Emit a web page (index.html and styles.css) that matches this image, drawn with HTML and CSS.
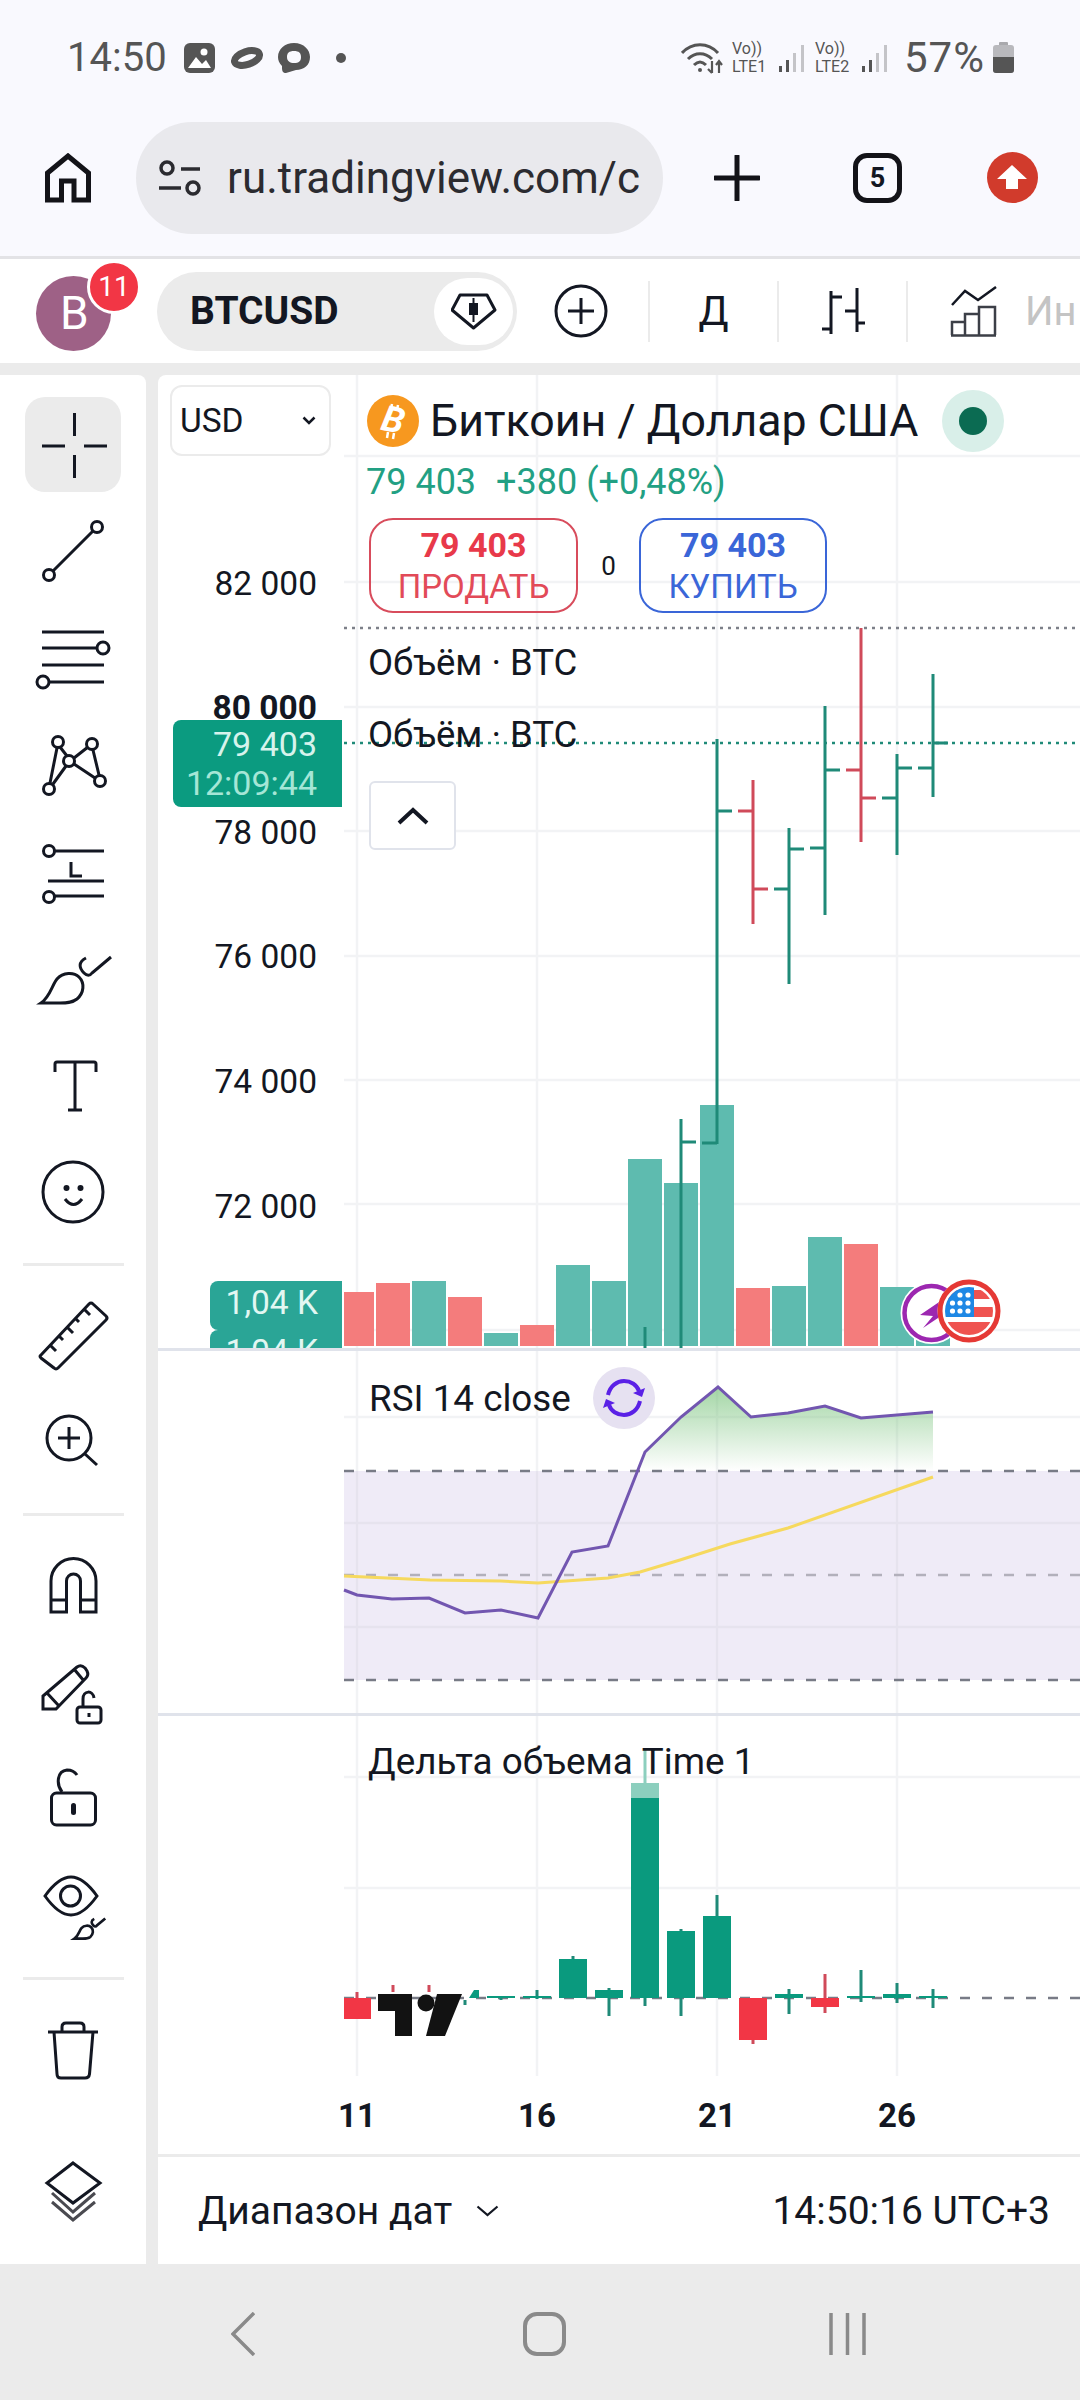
FILE: index.html
```html
<!DOCTYPE html>
<html lang="ru">
<head>
    <meta charset="UTF-8">
    <title>BTCUSD</title>
    <link rel="stylesheet" href="styles.css">
</head>
<body>
    <div class="status-bar">
        <span class="clock">14:50</span>
        <svg class="st-icon ml-19" width="31" height="30" viewBox="0 0 31 30"><rect width="31" height="30" rx="6" fill="#555"/><circle cx="20" cy="9" r="3.5" fill="#fff"/><path d="M4 25 L12 14 L18 21 L22 17 L27 25 Z" fill="#fff"/></svg>
        <svg class="st-icon ml-14" width="36" height="22" viewBox="0 0 36 22"><ellipse cx="18" cy="11" rx="13" ry="6.5" transform="rotate(-18 18 11)" fill="none" stroke="#555" stroke-width="7"/></svg>
        <svg class="st-icon ml-13" width="32" height="30" viewBox="0 0 32 30"><path d="M16 0 C26 0 32 7 32 14 C32 22 26 27 18 27 L8 30 C5 30 4 28 4 25 L4 23 C1 20 0 17 0 14 C0 6 7 0 16 0 Z M16 8 C11 8 9 10 9 14 C9 18 12 20 16 20 C21 20 23 18 23 14 C23 10 21 8 16 8 Z" fill="#555" fill-rule="evenodd"/></svg>
        <span class="st-dot"></span>
        <div class="st-right">
            <svg width="45" height="34" viewBox="0 0 45 34" fill="none" stroke="#555" stroke-width="3"><path d="M1 12 C11 1 27 1 37 12"/><path d="M7 18 C14 11 24 11 31 18"/><path d="M13 24 C17 20 21 20 25 24"/><circle cx="19" cy="29" r="2" fill="#555" stroke="none"/><path d="M31 20 V32 M27 28 L31 32 M35 24 L38 20 L41 24 M38 20 V32" stroke-width="2.2"/></svg>
            <div class="sim"><span>Vo))</span><span>LTE1</span></div>
            <svg class="sig" width="28" height="30" viewBox="0 0 28 30"><rect x="1" y="23" width="3" height="6" fill="#555"/><rect x="8" y="17" width="3" height="12" fill="#555"/><rect x="15" y="10" width="3" height="19" fill="#c4c4c8"/><rect x="23" y="2" width="3" height="27" fill="#c4c4c8"/></svg>
            <div class="sim sim-2"><span>Vo))</span><span>LTE2</span></div>
            <svg class="sig" width="28" height="30" viewBox="0 0 28 30"><rect x="1" y="23" width="3" height="6" fill="#555"/><rect x="8" y="17" width="3" height="12" fill="#555"/><rect x="15" y="10" width="3" height="19" fill="#c4c4c8"/><rect x="23" y="2" width="3" height="27" fill="#c4c4c8"/></svg>
            <span class="battery-pct">57%</span>
            <svg class="battery" width="21" height="31" viewBox="0 0 21 31"><rect x="6" y="0" width="9" height="4" rx="1" fill="#a9a9ad"/><rect x="0" y="3" width="21" height="28" rx="3" fill="#b9b9bd"/><path d="M0 15 H21 V28 Q21 31 18 31 H3 Q0 31 0 28 Z" fill="#555"/></svg>
        </div>
    </div>

    <div class="browser-bar">
        <svg class="home-btn" width="46" height="50" viewBox="45 153 46 50" fill="none" stroke="#131318" stroke-width="5"><path d="M47.5 200 V173 L68 156 L88.5 173 V200 H74 V181 H61.5 V200 Z"/></svg>
        <div class="url-pill">
            <svg class="tune" width="42" height="36" viewBox="159 159 42 36" fill="none" stroke="#2b2b30" stroke-width="3.5"><circle cx="167" cy="167" r="6"/><path d="M181 168 H200 M159 187 H181"/><circle cx="193" cy="187" r="6"/></svg>
            <span class="url-text">ru.tradingview.com/c</span>
        </div>
        <svg class="plus-btn" width="46" height="46" viewBox="0 0 46 46"><path d="M23 1 V45 M1 23 H45" stroke="#131318" stroke-width="5" stroke-linecap="round"/></svg>
        <div class="tab-count">5</div>
        <svg class="upload-btn" width="51" height="51" viewBox="987 153 51 51"><circle cx="1012.5" cy="178.5" r="25.5" fill="#d13b2c"/><path d="M1012 166 L1027 180 H1018 V190 H1006 V180 H997 Z" fill="#fff"/></svg>
    </div>

    <div class="tv-toolbar">
        <div class="avatar">B<span class="avatar-badge">11</span></div>
        <div class="symbol-pill">
            <span class="symbol-name">BTCUSD</span>
            <div class="symbol-diamond">
                <svg width="46" height="38" viewBox="450 292 46 38"><path d="M459 295 H486 L494 310 L472.5 328 L451 310 Z" fill="none" stroke="#131722" stroke-width="3" stroke-linejoin="round"/><rect x="468" y="303" width="9" height="12" fill="#131722"/><path d="M472.5 298 V322" stroke="#131722" stroke-width="2"/></svg>
            </div>
        </div>
        <svg class="add-symbol" width="54" height="54" viewBox="0 0 54 54" fill="none" stroke="#131722" stroke-width="3"><circle cx="27" cy="27" r="25"/><path d="M27 14 V40 M14 27 H40"/></svg>
        <span class="tb-sep"></span>
        <div class="tb-btn tb-interval">Д</div>
        <span class="tb-sep"></span>
        <div class="tb-btn">
            <svg width="44" height="48" viewBox="823 286 44 48" fill="none" stroke="#131722" stroke-width="3"><path d="M833 290 V333 M824 328 H833 M833 296 H844 M859 287 V331 M847 310 H859 M859 322 H867"/></svg>
        </div>
        <span class="tb-sep"></span>
        <svg class="tb-indicators" width="47" height="51" viewBox="953 284 47 51" fill="none" stroke="#3c3f47" stroke-width="2.5"><path d="M955 303 L968 289 L981 298 L999 285" stroke="#131722"/><path d="M955 333 V320 H968 V333 M968 333 V312 H982 V333 M982 333 V305 H998 V333 M954 333.5 H999" /></svg>
        <span class="tb-label">Ин</span>
    </div>

    <div class="workspace">
        <aside class="sidebar">
            <svg class="tool" viewBox="0 393 146 107"><rect x="25" y="397" width="96" height="95" rx="20" fill="#ebebeb"/><path d="M74.5 413 V436 M74.5 455 V478 M42 446 H65 M84 446 H107"/></svg>
            <svg class="tool" viewBox="0 500 146 107"><circle cx="97" cy="527" r="5.5"/><circle cx="49" cy="575" r="5.5"/><path d="M93 531 L53 571"/></svg>
            <svg class="tool" viewBox="0 607 146 107"><path d="M42 632 H104 M42 648 H97 M42 665 H104 M49 682 H104"/><circle cx="103" cy="648" r="6"/><circle cx="43" cy="682" r="6"/></svg>
            <svg class="tool" viewBox="0 714 146 107"><circle cx="58" cy="742" r="5.5"/><circle cx="92" cy="744" r="5.5"/><circle cx="69" cy="761" r="5.5"/><circle cx="49" cy="789" r="5.5"/><circle cx="100" cy="781" r="5.5"/><path d="M57 748 L50 783 M60 747 L67 756 M74 758 L88 747 M93 750 L99 775 M74 764 L95 778 M66 766 L53 784"/></svg>
            <svg class="tool" viewBox="0 821 146 107"><circle cx="49" cy="851" r="5.5"/><path d="M55 851 H104 M71 862 V876 H82"/><path d="M48 881 H104 M55 896 H104"/><circle cx="49" cy="897" r="5.5"/></svg>
            <svg class="tool" viewBox="0 928 146 107"><path d="M41 1003 C50 997 52 985 57 979 C63 972 74 972 79 977 C85 983 84 993 77 999 C72 1003 66 1003 60 1003 Z"/><path d="M86 958 C78 962 79 968 84 973 C87 976 90 976 92 973 L111 957"/></svg>
            <svg class="tool" viewBox="0 1035 146 107"><path d="M55 1072 V1064 Q55 1062 57 1062 H94 Q96 1062 96 1064 V1072 M75 1062 V1110 M68 1110 H82"/></svg>
            <svg class="tool" viewBox="0 1142 146 107"><circle cx="73" cy="1192" r="30"/><circle cx="66.5" cy="1188" r="3" class="tool-fill"/><circle cx="80.5" cy="1188" r="3" class="tool-fill"/><path d="M65 1199 Q73.5 1210 82 1199"/></svg>
            <div class="tool-sep sep-a"></div>
            <svg class="tool" viewBox="0 1283 146 107"><path d="M41 1355 L89 1304 Q91 1302 93 1304 L106 1316 Q108 1318 106 1320 L58 1368 Q56 1370 54 1368 L41 1358 Q39 1356 41 1355 Z"/><path d="M50 1345 L56 1351 M59 1336 L63 1340 M67 1327 L73 1333 M75 1318 L79 1322 M84 1309 L90 1315"/></svg>
            <svg class="tool" viewBox="0 1390 146 107"><circle cx="69" cy="1438" r="22"/><path d="M85 1454 L97 1465 M69 1427 V1449 M58 1438 H80"/></svg>
            <div class="tool-sep sep-b"></div>
            <svg class="tool" viewBox="0 1532 146 107"><path d="M51 1612 V1581 A22.5 22.5 0 0 1 96 1581 V1612 H80.5 V1581 A7 7 0 0 0 66.5 1581 V1612 Z M51 1600 H66.5 M80.5 1600 H96"/></svg>
            <svg class="tool" viewBox="0 1639 146 107"><path d="M43 1709 V1696 L77 1667 Q81 1664 85 1668 L87 1671 Q89 1675 86 1678 L56 1709 Z M47 1693 L59 1706 M74 1669 L84 1681"/><rect x="77" y="1707" width="24" height="16" rx="3"/><path d="M83 1707 V1699 C83 1690 93 1690 94 1698 M89 1713 V1717"/></svg>
            <svg class="tool" viewBox="0 1746 146 107"><rect x="51.5" y="1793" width="44" height="32" rx="5"/><path d="M62 1792 C56 1784 57 1771 67 1770 C71 1770 75 1772 77 1775"/><rect x="71" y="1803" width="5" height="12" rx="2.5" class="tool-fill"/></svg>
            <svg class="tool" viewBox="0 1853 146 107"><path d="M45 1896 C55 1882 63 1877 71 1877 C79 1877 87 1882 97 1896 C87 1910 79 1915 71 1915 C63 1915 55 1910 45 1896 Z"/><circle cx="70.5" cy="1896" r="10"/><g transform="translate(74 1918) scale(.44) translate(-40 -956)"><path d="M41 1003 C50 997 52 985 57 979 C63 972 74 972 79 977 C85 983 84 993 77 999 C72 1003 66 1003 60 1003 Z" class="tool-thick"/><path d="M86 958 C78 962 79 968 84 973 C87 976 90 976 92 973 L111 957" class="tool-thick"/></g></svg>
            <div class="tool-sep sep-c"></div>
            <svg class="tool" viewBox="0 1996 146 107"><path d="M48 2032 H98 M62 2032 V2027 Q62 2023 66 2023 H80 Q84 2023 84 2027 V2032 M54 2032 L57 2074 Q57 2078 61 2078 H85 Q89 2078 89.5 2074 L93 2032"/></svg>
            <svg class="tool layers" viewBox="0 2137 146 107"><path d="M73 2163 L100 2183 L73 2203 L47 2183 Z"/><path d="M52 2193 L73 2212 L95 2193 M52 2202 L73 2220 L95 2202" class="tool-grey"/></svg>
        </aside>

        <main class="chart">
            <section class="pane pane-main">
                <svg class="pane-svg" viewBox="158 375 922 973">
                    <g class="grid">
                        <path d="M344 456 H1080 M344 582 H1080 M344 707 H1080 M344 831 H1080 M344 956 H1080 M344 1080 H1080 M344 1204 H1080 M344 1330 H1080"/>
                        <path d="M357 375 V1348 M537 375 V1348 M717 375 V1348 M897 375 V1348"/>
                    </g>
                    <path class="dot-line" d="M344 628 H1080"/>
                    <path class="dot-line dot-green" d="M344 743 H1080"/>
                    <g class="vol-down">
                        <rect x="344" y="1292" width="30" height="54"/>
                        <rect x="376" y="1283" width="34" height="63"/>
                        <rect x="448" y="1297" width="34" height="49"/>
                        <rect x="520" y="1325" width="34" height="21"/>
                        <rect x="736" y="1288" width="34" height="58"/>
                        <rect x="844" y="1244" width="34" height="102"/>
                    </g>
                    <g class="vol-up">
                        <rect x="412" y="1281" width="34" height="65"/>
                        <rect x="484" y="1333" width="34" height="13"/>
                        <rect x="556" y="1265" width="34" height="81"/>
                        <rect x="592" y="1281" width="34" height="65"/>
                        <rect x="628" y="1159" width="34" height="187"/>
                        <rect x="664" y="1183" width="34" height="163"/>
                        <rect x="700" y="1105" width="34" height="241"/>
                        <rect x="772" y="1286" width="34" height="60"/>
                        <rect x="808" y="1237" width="34" height="109"/>
                        <rect x="880" y="1287" width="34" height="59"/>
                        <rect x="916" y="1335" width="34" height="11"/>
                    </g>
                    <g class="ohlc-up">
                        <path d="M645 1327 V1348"/>
                        <path d="M681 1119 V1348 M681 1142 H696"/>
                        <path d="M717 739 V1144 M702 1143 H717 M717 811 H732"/>
                        <path d="M789 828 V984 M774 889 H789 M789 849 H804"/>
                        <path d="M825 706 V915 M810 848 H825 M825 770 H840"/>
                        <path d="M897 754 V855 M882 798 H897 M897 768 H912"/>
                        <path d="M933 674 V797 M918 768 H933 M933 743 H948"/>
                    </g>
                    <g class="ohlc-down">
                        <path d="M753 780 V924 M738 811 H753 M753 889 H768"/>
                        <path d="M861 628 V842 M846 770 H861 M861 798 H876"/>
                    </g>
                    <text class="axis-text" x="317" y="595">82 000</text>
                    <text class="axis-text axis-bold" x="317" y="719">80 000</text>
                    <text class="axis-text" x="317" y="844">78 000</text>
                    <text class="axis-text" x="317" y="968">76 000</text>
                    <text class="axis-text" x="317" y="1093">74 000</text>
                    <text class="axis-text" x="317" y="1218">72 000</text>
                    <!-- event markers -->
                    <circle cx="931.5" cy="1313" r="31" fill="#fff"/>
                    <circle cx="931.5" cy="1313" r="27" fill="#fff" stroke="#9c27b0" stroke-width="4.5"/>
                    <path d="M945 1298 L920 1315 L933 1316 L923 1328 L950 1310 L938 1310 Z" fill="#9c27b0"/>
                    <circle cx="969" cy="1311" r="31.5" fill="#fff"/>
                    <clipPath id="flagClip"><circle cx="969" cy="1311" r="24"/></clipPath>
                    <g clip-path="url(#flagClip)">
                        <rect x="945" y="1290" width="48" height="9" fill="#ef5350"/>
                        <rect x="974" y="1307" width="20" height="10" fill="#ef5350"/>
                        <rect x="945" y="1322" width="48" height="14" fill="#ef5350"/>
                        <rect x="945" y="1285" width="29" height="32" fill="#1e88e5"/>
                        <g fill="#fff"><circle cx="960" cy="1295" r="2.6"/><circle cx="968" cy="1295" r="2.6"/><circle cx="952.5" cy="1303" r="2.6"/><circle cx="960" cy="1303" r="2.6"/><circle cx="968" cy="1303" r="2.6"/><circle cx="952.5" cy="1311" r="2.6"/><circle cx="960" cy="1311" r="2.6"/><circle cx="968" cy="1311" r="2.6"/></g>
                    </g>
                    <circle cx="969" cy="1311" r="29" fill="none" stroke="#e53935" stroke-width="5"/>
                </svg>

                <div class="currency-select">USD
                    <svg width="14" height="9" viewBox="0 0 14 9"><path d="M1.5 1.5 L7 7 L12.5 1.5" fill="none" stroke="#131722" stroke-width="2.5"/></svg>
                </div>

                <div class="legend">
                    <div class="legend-title">
                        <svg class="btc-logo" width="52" height="52" viewBox="0 0 52 52"><circle cx="26" cy="26" r="26" fill="#f7981f"/><path d="M25 9 L24 14 M31 10 L30 15 M21 37 L20 43 M27 38 L26 44" stroke="#fff" stroke-width="2.5"/><text class="btc-b" x="26" y="37" transform="rotate(12 26 26)">B</text></svg>
                        <span class="legend-name">Биткоин / Доллар США</span>
                        <span class="status-dot"><span></span></span>
                    </div>
                    <div class="legend-price"><span>79 403</span><span>+380 (+0,48%)</span></div>
                    <div class="trade-row">
                        <div class="trade-btn trade-sell"><b>79 403</b><span>ПРОДАТЬ</span></div>
                        <span class="spread">0</span>
                        <div class="trade-btn trade-buy"><b>79 403</b><span>КУПИТЬ</span></div>
                    </div>
                    <div class="legend-row">Объём · BTC</div>
                    <div class="legend-row">Объём · BTC</div>
                    <div class="collapse-btn">
                        <svg width="34" height="20" viewBox="0 0 34 20"><path d="M3 17 L17 4 L31 17" fill="none" stroke="#131722" stroke-width="4"/></svg>
                    </div>
                </div>

                <div class="price-pill"><span>79 403</span><span class="price-timer">12:09:44</span></div>
                <div class="vol-pill vol-pill-1">1,04 K</div>
                <div class="vol-pill vol-pill-2">1,04 K</div>
            </section>

            <section class="pane pane-rsi">
                <svg class="pane-svg" viewBox="158 1351 922 362">
                    <defs>
                        <linearGradient id="rsiFill" x1="0" y1="1387" x2="0" y2="1471" gradientUnits="userSpaceOnUse">
                            <stop offset="0" stop-color="#7cc47f" stop-opacity=".7"/>
                            <stop offset="1" stop-color="#7cc47f" stop-opacity="0"/>
                        </linearGradient>
                    </defs>
                    <rect x="344" y="1471" width="736" height="209" fill="#efebf7"/>
                    <g class="grid">
                        <path d="M344 1417 H1080"/>
                        <path d="M357 1351 V1713 M537 1351 V1713 M717 1351 V1713 M897 1351 V1713"/>
                    </g>
                    <path class="grid-band" d="M344 1523 H1080 M344 1627 H1080 M357 1471 V1680 M537 1471 V1680 M717 1471 V1680 M897 1471 V1680"/>
                    <path d="M637 1471 L645 1452 L681 1417 L718 1387 L751 1417 L788 1413 L825 1406 L861 1418 L933 1412 V1471 Z" fill="url(#rsiFill)"/>
                    <path class="dash" d="M344 1471 H1080 M344 1680 H1080"/>
                    <path class="dash dash-mid" d="M344 1575 H1080"/>
                    <polyline class="rsi-ma" points="344,1576 430,1580 501,1581 538,1583 608,1578 640,1572 680,1560 730,1544 788,1528 933,1477"/>
                    <polyline class="rsi-line" points="344,1590 357,1595 392,1599 429,1598 465,1613 501,1610 538,1618 572,1552 608,1546 645,1452 681,1417 718,1387 751,1417 788,1413 825,1406 861,1418 933,1412"/>
                </svg>
                <div class="rsi-legend">
                    <span class="pane-title">RSI 14 close</span>
                    <span class="refresh-badge">
                        <svg width="44" height="40" viewBox="0 0 44 40" fill="none" stroke="#5a20e6" stroke-width="4"><path d="M6 17 C8 8 15 3 22 3 C29 3 35 7 37 13"/><path d="M38 23 C36 32 29 37 22 37 C15 37 9 33 7 27"/><path d="M43 10 L40 19 L31 15 Z M1 30 L4 21 L13 25 Z" fill="#5a20e6" stroke="none"/></svg>
                    </span>
                </div>
            </section>

            <section class="pane pane-delta">
                <svg class="pane-svg" viewBox="158 1716 922 360">
                    <g class="grid">
                        <path d="M344 1777 H1080 M344 1888 H1080"/>
                        <path d="M357 1716 V2076 M537 1716 V2076 M717 1716 V2076 M897 1716 V2076"/>
                    </g>
                    <path class="dash" d="M344 1998 H1080"/>
                    <g class="wick-down">
                        <path d="M357 1992 V2019 M393 1985 V1992 M429 1985 V1992 M753 2040 V2044 M825 1974 V2013"/>
                    </g>
                    <rect class="body-down" x="344" y="1998" width="27" height="21"/>
                    <rect class="body-down" x="739" y="1998" width="28" height="42"/>
                    <rect class="body-down" x="811" y="1998" width="28" height="9"/>
                    <g class="wick-up">
                        <path d="M465 2000 V2005 M501 1996 V2000 M537 1990 V1999 M573 1956 V1998 M609 1988 V2016 M645 1798 V2006 M681 1929 V2016 M717 1895 V1998 M789 1989 V2014 M861 1970 V2002 M897 1983 V2003 M933 1989 V2008"/>
                    </g>
                    <path class="wick-faint" d="M645 1750 V1783"/>
                    <rect x="631" y="1783" width="28" height="15" fill="#8ccfbe"/>
                    <path class="body-up" d="M469 1998 L474 1990 H479 V1998 Z"/>
                    <rect class="body-up" x="487" y="1996" width="28" height="2"/>
                    <rect class="body-up" x="523" y="1996" width="28" height="2"/>
                    <rect class="body-up" x="559" y="1959" width="28" height="39"/>
                    <rect class="body-up" x="595" y="1990" width="28" height="8"/>
                    <rect class="body-up" x="631" y="1798" width="28" height="200"/>
                    <rect class="body-up" x="667" y="1931" width="28" height="67"/>
                    <rect class="body-up" x="703" y="1916" width="28" height="82"/>
                    <rect class="body-up" x="775" y="1994" width="28" height="4"/>
                    <rect class="body-up" x="847" y="1996" width="28" height="2"/>
                    <rect class="body-up" x="883" y="1994" width="28" height="4"/>
                    <rect class="body-up" x="919" y="1996" width="28" height="2"/>
                    <!-- chart logo -->
                    <path d="M378 1994 H412 V2036 H395 V2011 H378 Z" fill="#121212"/>
                    <circle cx="426" cy="2003" r="8.5" fill="#121212"/>
                    <path d="M437 1994 H462 L445 2036 H426 Z" fill="#121212"/>
                </svg>
                <div class="pane-title delta-title">Дельта объема Time 1</div>
            </section>

            <div class="time-axis">
                <span>11</span><span>16</span><span>21</span><span>26</span>
            </div>

            <div class="range-bar">
                <div class="range-select">Диапазон дат
                    <svg width="23" height="12" viewBox="0 0 23 12"><path d="M1.5 1.5 L11.5 10 L21.5 1.5" fill="none" stroke="#131722" stroke-width="2.2"/></svg>
                </div>
                <span>14:50:16 UTC+3</span>
            </div>
        </main>
    </div>

    <nav class="nav-bar">
        <svg width="24" height="44" viewBox="0 0 24 44"><path d="M23 1 L2 22 L23 43" fill="none" stroke="#8a8a8a" stroke-width="3.5"/></svg>
        <svg class="nav-home" width="43" height="44" viewBox="0 0 43 44"><rect x="2" y="2" width="39" height="40" rx="12" fill="none" stroke="#8a8a8a" stroke-width="4"/></svg>
        <svg class="nav-recent" width="37" height="44" viewBox="0 0 37 44"><path d="M2 1 V43 M18.5 1 V43 M35 1 V43" stroke="#8a8a8a" stroke-width="3.5"/></svg>
    </nav>
</body>
</html>
```
FILE: styles.css
```css
* {
    box-sizing: border-box;
}
body {
    margin: 0;
    width: 1080px;
    height: 2400px;
    display: flex;
    flex-direction: column;
    font-family: Roboto, "Liberation Sans", sans-serif;
    color: #131722;
    background-color: #fff;
    overflow: hidden;
}

/* phone status bar */
.status-bar {
    height: 115px;
    padding: 0 66px 0 67px;
    display: flex;
    align-items: center;
    background-color: #f9f9fe;
    color: #555;
}
.clock {
    font-size: 40px;
}
.ml-19 { margin-left: 17px; }
.ml-14 { margin-left: 14px; }
.ml-13 { margin-left: 13px; }
.st-dot {
    width: 10px;
    height: 10px;
    margin-left: 26px;
    border-radius: 50%;
    background-color: #555;
}
.st-right {
    margin-left: auto;
    display: flex;
    align-items: center;
}
.sim {
    margin-left: 6px;
    width: 38px;
    display: flex;
    flex-direction: column;
    font-size: 16px;
    line-height: 18px;
}
.sim-2 {
    margin-left: 9px;
}
.sig {
    margin-left: 8px;
}
.battery-pct {
    margin-left: 15px;
    font-size: 42px;
    letter-spacing: 1px;
}
.battery {
    margin-left: 8px;
}

/* browser bar */
.browser-bar {
    height: 144px;
    padding: 0 0 16px 45px;
    display: flex;
    align-items: center;
    background-color: #f9f9fe;
    border-bottom: 3px solid #e3e3e6;
}
.url-pill {
    width: 527px;
    height: 112px;
    margin-left: 45px;
    padding: 0 21px 0 23px;
    display: flex;
    align-items: center;
    background-color: #e9e9ed;
    border-radius: 56px;
}
.url-text {
    margin-left: 26px;
    white-space: nowrap;
    font-size: 44px;
    color: #2b2b30;
}
.plus-btn {
    margin-left: 51px;
}
.tab-count {
    width: 49px;
    height: 50px;
    margin-left: 93px;
    display: flex;
    align-items: center;
    justify-content: center;
    border: 5px solid #131318;
    border-radius: 14px;
    font-size: 27px;
    font-weight: 700;
}
.upload-btn {
    margin-left: 85px;
}

/* tradingview top toolbar */
.tv-toolbar {
    height: 104px;
    display: flex;
    align-items: center;
    overflow: hidden;
    background-color: #fff;
}
.tv-toolbar > * {
    flex: none;
}
.avatar {
    position: relative;
    width: 75px;
    height: 75px;
    margin-left: 36px;
    margin-top: 5px;
    padding-left: 24px;
    line-height: 75px;
    font-size: 46px;
    color: #fff;
    background-color: #9e6186;
    border-radius: 50%;
}
.avatar-badge {
    position: absolute;
    left: 51px;
    top: -16px;
    width: 54px;
    height: 54px;
    border: 3px solid #fff;
    border-radius: 50%;
    background-color: #f23645;
    color: #fff;
    font-size: 28px;
    line-height: 48px;
    text-align: center;
}
.symbol-pill {
    width: 360px;
    height: 79px;
    margin-left: 46px;
    padding: 0 4px 0 33px;
    display: flex;
    align-items: center;
    justify-content: space-between;
    background-color: #ebebeb;
    border-radius: 40px;
}
.symbol-name {
    font-size: 39px;
    font-weight: 700;
}
.symbol-diamond {
    width: 79px;
    height: 67px;
    display: flex;
    align-items: center;
    justify-content: center;
    background-color: #fff;
    border-radius: 34px;
}
.add-symbol {
    margin-left: 37px;
}
.tb-sep {
    width: 2px;
    height: 61px;
    background-color: #ebebeb;
}
.add-symbol + .tb-sep {
    margin-left: 40px;
}
.tb-btn {
    width: 127px;
    display: flex;
    justify-content: center;
}
.tb-interval {
    font-size: 40px;
}
.tb-indicators {
    margin-left: 42px;
}
.tb-label {
    margin-left: 28px;
    font-size: 40px;
    color: #c4c4c4;
    white-space: nowrap;
}

/* main work area */
.workspace {
    flex: 1;
    display: flex;
    gap: 12px;
    padding-top: 12px;
    background-color: #ebebeb;
}
.sidebar {
    width: 146px;
    padding-top: 18px;
    display: flex;
    flex-direction: column;
    background-color: #fff;
    border-top-right-radius: 8px;
}
.tool {
    width: 146px;
    height: 107px;
    flex: none;
    fill: none;
    stroke: #131722;
    stroke-width: 3;
}
.tool rect[fill] {
    stroke: none;
}
.tool-fill {
    fill: #131722;
    stroke: none;
}
.tool-thick {
    stroke-width: 6;
}
.tool-grey {
    stroke: #4a4a50;
}
.layers {
    margin-top: 34px;
}
.tool-sep {
    height: 3px;
    width: 101px;
    margin-left: 23px;
    flex: none;
    background-color: #ebebeb;
}
.sep-a { margin-top: 14px; margin-bottom: 17px; }
.sep-b { margin-top: 16px; margin-bottom: 16px; }
.sep-c { margin-top: 17px; margin-bottom: 16px; }

/* chart panes */
.chart {
    width: 922px;
    display: flex;
    flex-direction: column;
    background-color: #fff;
    border-top-left-radius: 8px;
}
.pane {
    position: relative;
    overflow: hidden;
    flex: none;
}
.pane-main {
    height: 976px;
    border-bottom: 3px solid #e0e3eb;
}
.pane-rsi {
    height: 365px;
    border-bottom: 3px solid #e0e3eb;
}
.pane-delta {
    height: 360px;
}
.pane-svg {
    position: absolute;
    left: 0;
    top: 0;
    width: 922px;
}
.pane-main .pane-svg { height: 973px; }
.pane-rsi .pane-svg { height: 362px; }
.pane-delta .pane-svg { height: 360px; }
.grid {
    fill: none;
    stroke: #f2f3f5;
    stroke-width: 2.5;
}
.grid-band {
    fill: none;
    stroke: #e6e3ee;
    stroke-width: 2.5;
}
.dot-line {
    fill: none;
    stroke: #7d8089;
    stroke-width: 2.5;
    stroke-dasharray: 3 5;
}
.dot-green {
    stroke: #1f8a78;
}
.vol-up {
    fill: #5ebbaf;
}
.vol-down {
    fill: #f47c7c;
}
.ohlc-up {
    fill: none;
    stroke: #1f8a78;
    stroke-width: 3;
}
.ohlc-down {
    fill: none;
    stroke: #d04a5a;
    stroke-width: 3;
}
.axis-text {
    font-size: 33.5px;
    text-anchor: end;
    fill: #131722;
}
.axis-bold {
    font-weight: 700;
}
.currency-select {
    position: absolute;
    left: 12px;
    top: 10px;
    width: 161px;
    height: 71px;
    padding: 0 13px 0 8px;
    display: flex;
    align-items: center;
    justify-content: space-between;
    font-size: 33.5px;
    background-color: #fff;
    border: 2.5px solid #ebebeb;
    border-radius: 12px;
}

/* legend */
.legend {
    position: absolute;
    left: 210px;
    top: 14px;
    display: flex;
    flex-direction: column;
    align-items: flex-start;
}
.legend-title {
    height: 64px;
    margin-left: -1px;
    display: flex;
    align-items: center;
}
.btc-b {
    font-size: 36px;
    font-weight: 700;
    font-style: italic;
    text-anchor: middle;
    fill: #fff;
}
.legend-name {
    margin-left: 11px;
    font-size: 44.7px;
    white-space: nowrap;
}
.status-dot {
    width: 62px;
    height: 62px;
    margin-left: 24px;
    display: flex;
    align-items: center;
    justify-content: center;
    border-radius: 50%;
    background-color: #d9efe9;
}
.status-dot span {
    width: 28px;
    height: 28px;
    border-radius: 50%;
    background-color: #0b6b52;
}
.legend-price {
    height: 58px;
    margin-left: -2px;
    display: flex;
    align-items: center;
    gap: 20px;
    font-size: 36px;
    color: #22a083;
}
.trade-row {
    margin-top: 7px;
    margin-left: 1px;
    display: flex;
    align-items: center;
}
.trade-btn {
    height: 95px;
    display: flex;
    flex-direction: column;
    align-items: center;
    justify-content: center;
    border: 2.5px solid;
    border-radius: 24px;
    line-height: 41px;
    font-size: 33px;
}
.trade-btn b {
    font-size: 34px;
    font-weight: 700;
}
.trade-sell {
    width: 209px;
    border-color: #d84c5c;
    color: #e24a58;
}
.trade-sell b {
    color: #e8394a;
}
.trade-buy {
    width: 188px;
    border-color: #3a66d8;
    color: #3a66d8;
}
.spread {
    width: 61px;
    text-align: center;
    font-size: 26px;
}
.legend-row {
    height: 72px;
    display: flex;
    align-items: center;
    font-size: 36.5px;
    white-space: nowrap;
}
.legend-row:nth-of-type(4) {
    margin-top: 13px;
}
.collapse-btn {
    width: 87px;
    height: 69px;
    margin-top: 11px;
    margin-left: 1px;
    display: flex;
    align-items: center;
    justify-content: center;
    background-color: #fff;
    border: 2.5px solid #e0e3eb;
    border-radius: 6px;
}
.price-pill {
    position: absolute;
    left: 15px;
    top: 345px;
    width: 169px;
    height: 87px;
    padding-right: 25px;
    display: flex;
    flex-direction: column;
    align-items: flex-end;
    justify-content: center;
    background-color: #0b9b80;
    border-radius: 8px 0 0 8px;
    font-size: 34px;
    line-height: 39px;
    color: #d6f3ec;
}
.price-timer {
    color: #a5e6d6;
}
.vol-pill {
    position: absolute;
    left: 52px;
    width: 132px;
    height: 49px;
    padding-right: 24px;
    text-align: right;
    background-color: #2aa596;
    border-radius: 8px 0 0 8px;
    font-size: 33.5px;
    line-height: 44px;
    color: #e2f7f2;
}
.vol-pill-1 { top: 906px; }
.vol-pill-2 { top: 955px; }

.rsi-legend {
    position: absolute;
    left: 211px;
    top: 16px;
    display: flex;
    align-items: center;
    gap: 22px;
}
.pane-title {
    font-size: 36.8px;
    white-space: nowrap;
}
.refresh-badge {
    width: 62px;
    height: 62px;
    display: flex;
    align-items: center;
    justify-content: center;
    border-radius: 50%;
    background-color: #e6e1f1;
}
.dash {
    fill: none;
    stroke: #787b86;
    stroke-width: 2.5;
    stroke-dasharray: 10 12;
}
.dash-mid {
    stroke: #b2b0bb;
}
.rsi-line {
    fill: none;
    stroke: #7256b0;
    stroke-width: 3;
}
.rsi-ma {
    fill: none;
    stroke: #f6d95e;
    stroke-width: 3;
}
.delta-title {
    position: absolute;
    left: 210px;
    top: 24px;
}
.wick-up {
    fill: none;
    stroke: #1f8a78;
    stroke-width: 3;
}
.wick-down {
    fill: none;
    stroke: #d04a5a;
    stroke-width: 3;
}
.wick-faint {
    fill: none;
    stroke: #8ccfbe;
    stroke-width: 3;
}
.body-up {
    fill: #0a9a7e;
}
.body-down {
    fill: #f23645;
}

/* time axis and bottom bar */
.time-axis {
    height: 78px;
    padding-left: 109px;
    display: grid;
    grid-template-columns: repeat(4, 180px);
    align-items: center;
    justify-items: center;
    border-bottom: 3px solid #ebebeb;
    box-sizing: content-box;
    font-size: 33px;
    font-weight: 700;
}
.range-bar {
    flex: 1;
    padding: 0 30px 0 40px;
    display: flex;
    align-items: center;
    justify-content: space-between;
    font-size: 39px;
}
.range-select {
    display: flex;
    align-items: center;
    gap: 24px;
}

/* android nav */
.nav-bar {
    height: 136px;
    padding: 48px 0 0 231px;
    display: flex;
    align-items: flex-start;
    background-color: #ebebeb;
}
.nav-home {
    margin-left: 268px;
}
.nav-recent {
    margin-left: 263px;
}
```
